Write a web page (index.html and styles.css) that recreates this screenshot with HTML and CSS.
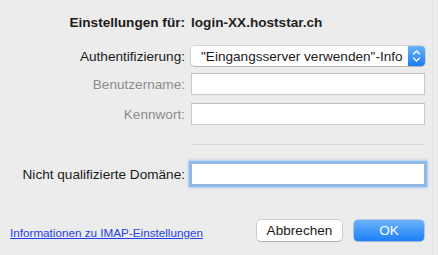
FILE: index.html
```html
<!DOCTYPE html>
<html lang="de">
<head>
  <meta charset="UTF-8">
  <meta name="viewport" content="width=device-width, initial-scale=1.0">
  <link rel="stylesheet" href="styles.css">
</head>
<body>
  <div class="sheet">

    <div class="row title-row">
      <div class="label strong">Einstellungen für:</div>
      <div class="value">login-XX.hoststar.ch</div>
    </div>

    <div class="row popup-row">
      <div class="label">Authentifizierung:</div>
      <div class="popup">
        <span class="popup-text">"Eingangsserver verwenden"-Info</span>
        <span class="stepper">
          <svg width="17" height="20" viewBox="0 0 17 20">
            <path d="M5.5 8 L8.5 5 L11.5 8" fill="none" stroke="#fff" stroke-width="1.4" stroke-linecap="round" stroke-linejoin="round"/>
            <path d="M5.5 12 L8.5 15 L11.5 12" fill="none" stroke="#fff" stroke-width="1.4" stroke-linecap="round" stroke-linejoin="round"/>
          </svg>
        </span>
      </div>
    </div>

    <div class="row field-row user-row">
      <div class="label disabled">Benutzername:</div>
      <div class="field"></div>
    </div>

    <div class="row field-row pass-row">
      <div class="label disabled">Kennwort:</div>
      <div class="field"></div>
    </div>

    <div class="row sep-row">
      <div></div>
      <div class="separator"></div>
    </div>

    <div class="row field-row domain-row">
      <div class="label">Nicht qualifizierte Domäne:</div>
      <div class="field focused"></div>
    </div>

    <div class="footer">
      <a class="help-link" href="#">Informationen zu IMAP-Einstellungen</a>
      <div class="buttons">
        <button class="btn">Abbrechen</button>
        <button class="btn btn-default">OK</button>
      </div>
    </div>

  </div>
</body>
</html>
```

FILE: styles.css
```css
:root {
  --bg-color: #ececec;
  --text-color: #1b1b1b;
  --muted-color: #8c8c8c;
  --field-border: #c9c9c9;
  --focus-ring: #8ab8ef;
  --link-color: #1f3fe6;
}

html, body {
  margin: 0;
  padding: 0;
  height: 100%;
}

body {
  font-family: 'Liberation Sans', Arial, sans-serif;
  font-size: 13.6px;
  color: var(--text-color);
  background-color: var(--bg-color);
}

.sheet {
  height: 255px;
  box-sizing: border-box;
  padding-top: 15px;
  border-right: 1px solid #e3e3e3;
  margin-right: 5px;
}

.row {
  display: grid;
  grid-template-columns: 185px 234px;
  column-gap: 6px;
  align-items: center;
}

.label {
  text-align: right;
  white-space: nowrap;
}

.strong {
  font-weight: bold;
}

.disabled {
  color: var(--muted-color);
}

.title-row {
  line-height: 16px;
}

.title-row .value {
  font-weight: bold;
  color: #222;
}

.popup-row {
  margin-top: 15px;
}

.popup {
  display: flex;
  align-items: center;
  height: 20px;
  box-sizing: border-box;
  background: #fff;
  border-radius: 4px;
  box-shadow: 0 0 0 0.5px rgba(0, 0, 0, 0.2), 0 1px 1px rgba(0, 0, 0, 0.15);
  overflow: hidden;
}

.popup-text {
  flex: 1;
  padding-left: 10px;
  white-space: nowrap;
  overflow: hidden;
}

.stepper {
  width: 17px;
  height: 20px;
  background: linear-gradient(#69b1fa, #1a7ff9);
  display: flex;
}

.field-row .field {
  height: 22px;
  box-sizing: border-box;
  background: #fff;
  border: 1px solid var(--field-border);
  border-top-color: #bdbdbd;
}

.user-row {
  margin-top: 7px;
}

.pass-row {
  margin-top: 8px;
}

.sep-row {
  margin-top: 19px;
}

.separator {
  height: 1px;
  background: #d6d6d6;
}

.domain-row {
  margin-top: 18px;
}

.field.focused {
  border-color: #9ab6dc;
  box-shadow: 0 0 0 2px var(--focus-ring), 0 0 2px 3px rgba(138, 184, 239, 0.6);
}

.footer {
  display: flex;
  justify-content: space-between;
  align-items: center;
  margin-top: 35px;
  padding-left: 10px;
  padding-right: 8px;
}

.help-link {
  font-size: 11.7px;
  color: var(--link-color);
  text-decoration: underline;
  margin-top: 4px;
}

.buttons {
  display: flex;
  gap: 12px;
}

.btn {
  font-family: inherit;
  font-size: 13.6px;
  height: 21px;
  padding: 0;
  width: 85px;
  border-radius: 4px;
  background: #fff;
  color: var(--text-color);
  border: none;
  box-shadow: 0 0 0 0.5px rgba(0, 0, 0, 0.25), 0 1px 1px rgba(0, 0, 0, 0.15);
}

.btn-default {
  width: 70px;
  color: #fff;
  background: linear-gradient(#6ab3fa, #1c80f9);
  box-shadow: 0 0 0 0.5px rgba(20, 100, 220, 0.5), 0 1px 1px rgba(0, 0, 0, 0.12);
}
```
